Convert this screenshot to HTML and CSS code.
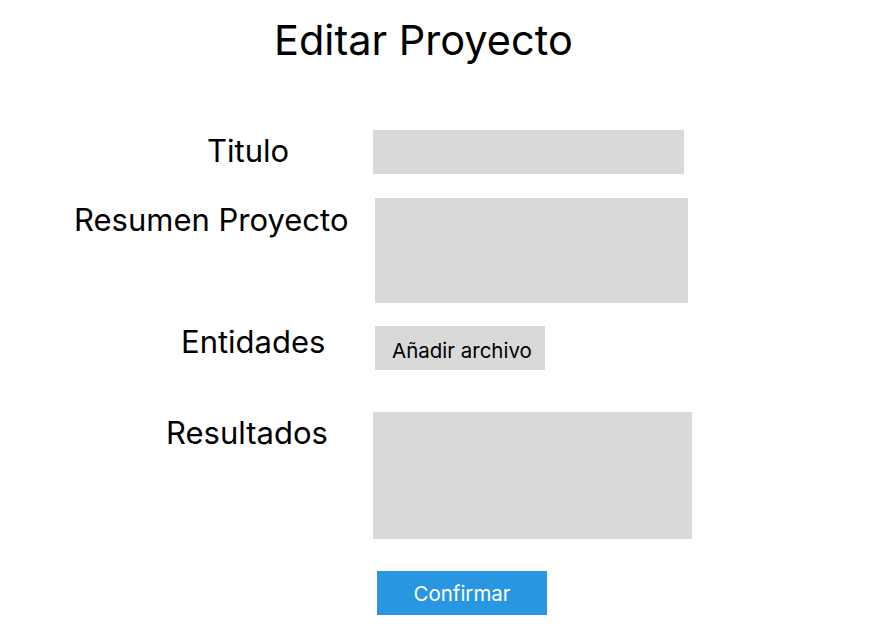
FILE: index.html
```html
<!DOCTYPE html>
<html lang="es">
<head>
<meta charset="utf-8">
<title>Editar Proyecto</title>
<link rel="stylesheet" href="styles.css">
</head>
<body>
<main class="page">
  <h1 class="title">Editar Proyecto</h1>
  <form class="form">
    <div class="row row-titulo">
      <label class="label">Titulo</label>
      <div class="field field-titulo"></div>
    </div>
    <div class="row row-resumen">
      <label class="label">Resumen Proyecto</label>
      <div class="field field-resumen"></div>
    </div>
    <div class="row row-entidades">
      <label class="label">Entidades</label>
      <div class="file-btn">Añadir archivo</div>
    </div>
    <div class="row row-resultados">
      <label class="label">Resultados</label>
      <div class="field field-resultados"></div>
    </div>
    <div class="row row-confirm">
      <div class="confirm">Confirmar</div>
    </div>
  </form>
</main>
</body>
</html>
```
FILE: styles.css
```css
html, body {
  margin: 0;
  padding: 0;
  background: #ffffff;
}
body {
  font-family: Inter, "Noto Sans", sans-serif;
  color: #000000;
  width: 869px;
  height: 628px;
  overflow: hidden;
}
.page {
  padding-top: 16px;
}
.title {
  margin: 0;
  padding-left: 274px;
  font-size: 41.5px;
  font-weight: 400;
  line-height: 48px;
}
.form {
  display: flex;
  flex-direction: column;
  margin-top: 66px;
}
.row {
  display: flex;
  align-items: flex-start;
}
.label {
  box-sizing: border-box;
  flex: none;
  width: 373px;
  font-size: 31px;
  line-height: 36px;
  white-space: nowrap;
}
.field {
  background: #d9d9d9;
}
.row-titulo .label { padding-left: 207px; margin-top: 3px; }
.field-titulo { width: 311px; height: 44px; }

.row-resumen { margin-top: 24px; }
.row-resumen .label { padding-left: 74px; margin-top: 4px; }
.field-resumen { width: 313px; height: 105px; margin-left: 2px; }

.row-entidades { margin-top: 23px; }
.row-entidades .label { padding-left: 181px; margin-top: -2px; }
.file-btn {
  box-sizing: border-box;
  margin-left: 2px;
  width: 170px;
  height: 44px;
  padding-left: 17px;
  padding-top: 13px;
  background: #d9d9d9;
  font-size: 20.5px;
  line-height: 24px;
  white-space: nowrap;
}

.row-resultados { margin-top: 42px; }
.row-resultados .label { padding-left: 166px; margin-top: 3px; }
.field-resultados { width: 319px; height: 127px; }

.row-confirm { margin-top: 32px; padding-left: 377px; }
.confirm {
  width: 170px;
  height: 44px;
  background: #2996e2;
  color: #ffffff;
  font-size: 20.5px;
  line-height: 45px;
  text-align: center;
}
```
